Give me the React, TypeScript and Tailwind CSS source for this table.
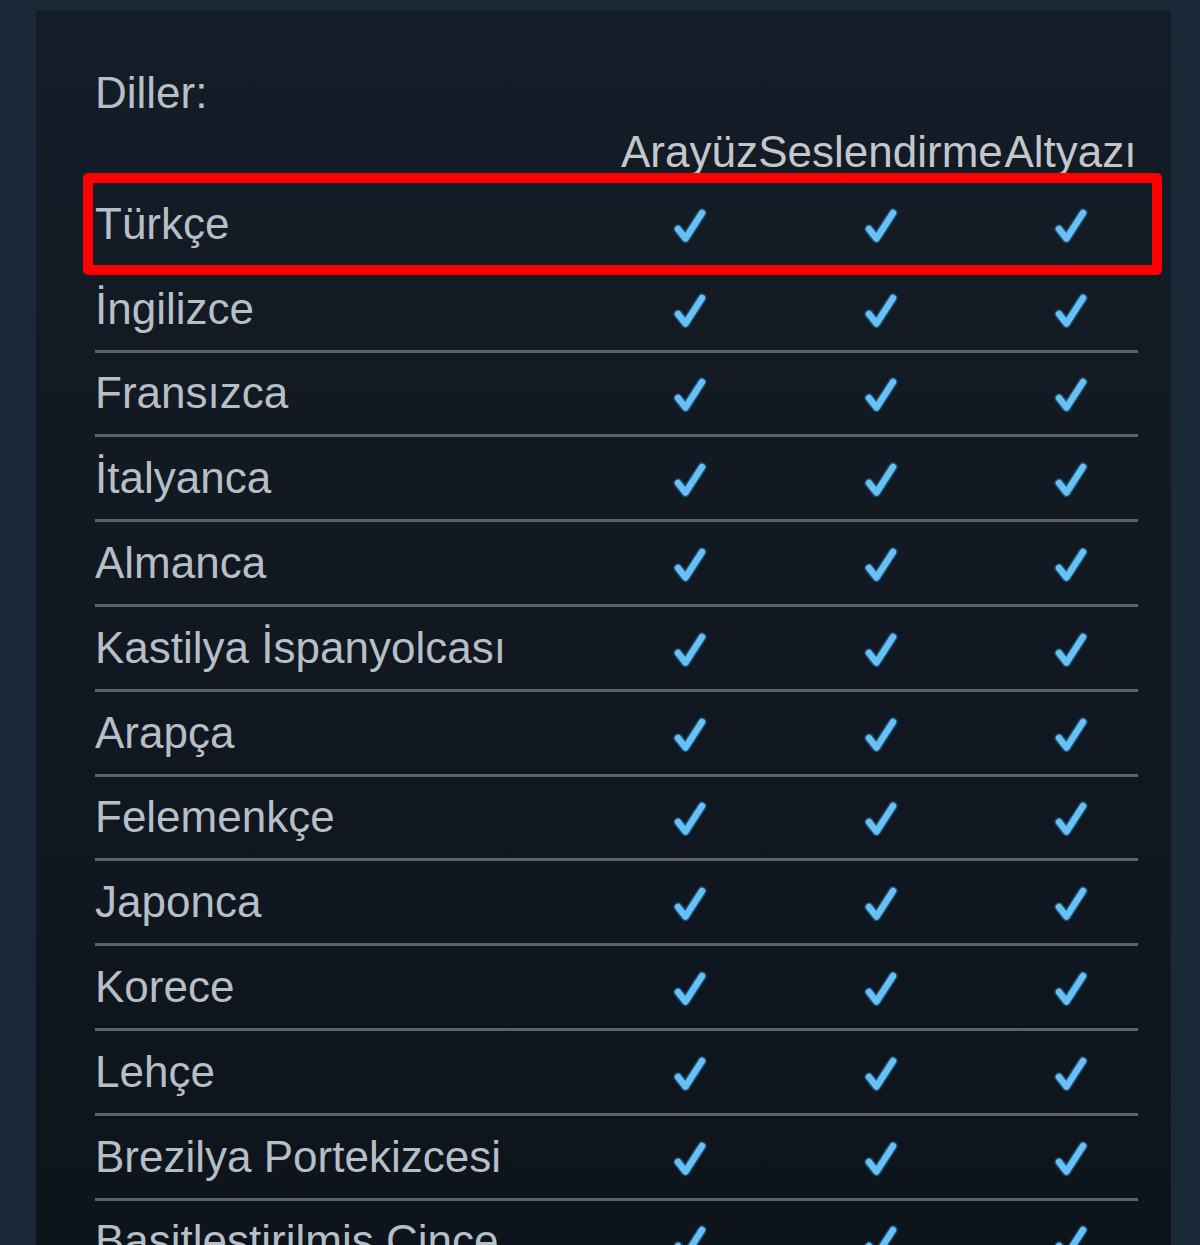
import React from "react";

const langs = [
  "Türkçe",
  "İngilizce",
  "Fransızca",
  "İtalyanca",
  "Almanca",
  "Kastilya İspanyolcası",
  "Arapça",
  "Felemenkçe",
  "Japonca",
  "Korece",
  "Lehçe",
  "Brezilya Portekizcesi",
  "Basitleştirilmiş Çince",
  "Geleneksel Çince",
  "Rusça",
];

function Check() {
  return (
    <svg width="36" height="38" viewBox="0 0 36 38" className="block">
      <path
        d="M6 22 L13.5 31.5 L30 6"
        fill="none"
        stroke="#1d4a6c"
        strokeWidth="9.5"
        strokeLinecap="round"
        strokeLinejoin="round"
      />
      <path
        d="M6 22 L13.5 31.5 L30 6"
        fill="none"
        stroke="#67c1f5"
        strokeWidth="6.5"
        strokeLinecap="round"
        strokeLinejoin="round"
      />
    </svg>
  );
}

export default function App() {
  return (
    <div
      className="h-[1245px] w-[1200px] overflow-hidden bg-[#1b2838] pt-[10px] pl-[36px] pr-[29px]"
      style={{ fontFamily: '"Liberation Sans", Arial, sans-serif' }}
    >
      <div className="h-full bg-linear-to-b from-[#141c27] to-[#0e141c] pt-[58px] pl-[59px] pr-[33px] text-[44px] leading-[50px] text-[#b6bec6]">
        <div>Diller:</div>
        <div className="mt-[9px] grid grid-cols-[1fr_137px_245px_135px] pb-[6px] text-[#c3c7cb]">
          <div />
          <div className="text-center whitespace-nowrap">Arayüz</div>
          <div className="text-center whitespace-nowrap">Seslendirme</div>
          <div className="text-center whitespace-nowrap">Altyazı</div>
        </div>
        {langs.map((l, i) => (
          <div
            key={l}
            className="relative grid h-[84.8px] grid-cols-[1fr_137px_245px_135px] items-center border-b-[3px] border-[#5a636d]"
          >
            <div className="whitespace-nowrap">{l}</div>
            <div className="flex justify-center pt-[4px]">
              <Check />
            </div>
            <div className="flex justify-center pt-[4px]">
              <Check />
            </div>
            <div className="flex justify-center pt-[4px]">
              <Check />
            </div>
            {i === 0 && (
              <div className="pointer-events-none absolute top-[-10px] bottom-[-10px] left-[-12px] right-[-24px] rounded-[5px] border-[10px] border-[#ff0000]" />
            )}
          </div>
        ))}
      </div>
    </div>
  );
}
